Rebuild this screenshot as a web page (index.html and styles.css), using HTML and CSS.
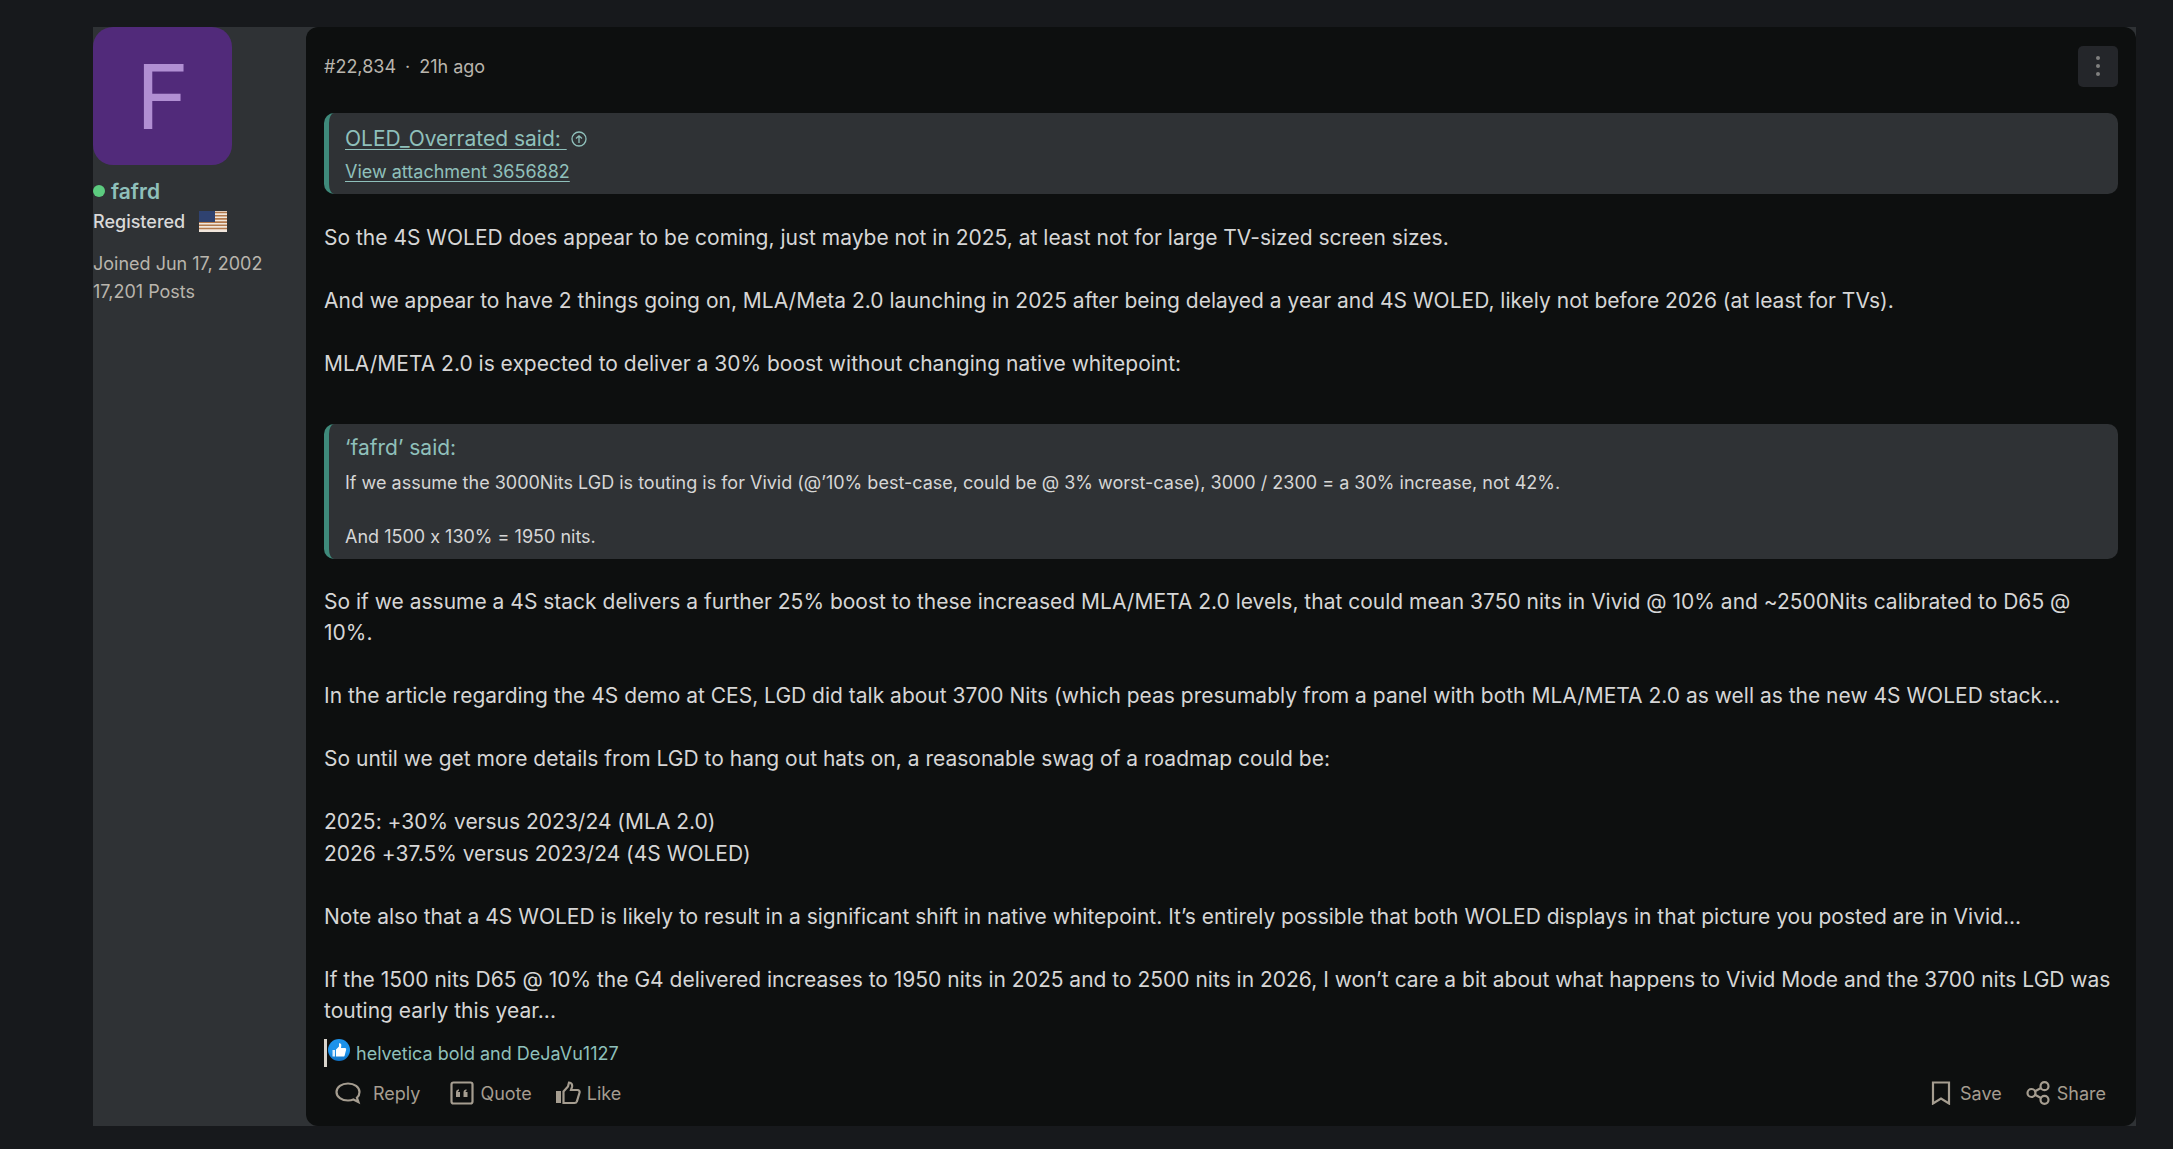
FILE: index.html
```html
<!DOCTYPE html>
<html lang="en">
<head>
<meta charset="utf-8">
<title>Post #22,834</title>
<link rel="stylesheet" href="styles.css">
</head>
<body>
<article class="post">
  <aside class="author">
    <div class="avatar">F</div>
    <div class="name-row"><span class="online"></span><a class="name">fafrd</a></div>
    <div class="title-row">
      <span class="role">Registered</span>
      <svg class="flag" viewBox="0 0 28 21" aria-hidden="true">
        <rect width="28" height="21" fill="#f1e6dc"/>
        <path d="M0 1.500h28M0 4.700h28M0 7.900h28M0 11.100h28M0 14.300h28M0 17.500h28" stroke="#b2794d" stroke-width="1.600"/>
        <rect width="16" height="11" fill="#2f4270"/>
      </svg>
    </div>
    <div class="stats">
      <div>Joined Jun 17, 2002</div>
      <div>17,201 Posts</div>
    </div>
  </aside>
  <main class="body">
    <header class="meta">
      <span class="meta-text">#22,834<span class="dot">·</span>21h ago</span>
      <button class="more" aria-label="More">
        <svg viewBox="0 0 4 20" width="4" height="20"><circle cx="2" cy="2" r="2"/><circle cx="2" cy="10" r="2"/><circle cx="2" cy="18" r="2"/></svg>
      </button>
    </header>
    <blockquote class="quote first">
      <div class="quote-head"><a class="link">OLED_Overrated said:&nbsp;</a>
        <svg class="up" viewBox="0 0 16 16"><circle cx="8" cy="8" r="7"/><path d="M8 12V5M5 7.600 8 4.800l3 2.800"/></svg>
      </div>
      <a class="link attach">View attachment 3656882</a>
    </blockquote>
    <div class="text lead">
      <p>So the 4S WOLED does appear to be coming, just maybe not in 2025, at least not for large TV-sized screen sizes.</p>
      <p>And we appear to have 2 things going on, MLA/Meta 2.0 launching in 2025 after being delayed a year and 4S WOLED, likely not before 2026 (at least for TVs).</p>
      <p>MLA/META 2.0 is expected to deliver a 30% boost without changing native whitepoint:</p>
    </div>
    <blockquote class="quote second">
      <div class="quote-head plain">‘fafrd’ said:</div>
      <div class="quote-text">If we assume the 3000Nits LGD is touting is for Vivid (@’10% best-case, could be @ 3% worst-case), 3000 / 2300 = a 30% increase, not 42%.<br><br>And 1500 x 130% = 1950 nits.</div>
    </blockquote>
    <div class="text after">
      <p>So if we assume a 4S stack delivers a further 25% boost to these increased MLA/META 2.0 levels, that could mean 3750 nits in Vivid @ 10% and ~2500Nits calibrated to D65 @ 10%.</p>
      <p>In the article regarding the 4S demo at CES, LGD did talk about 3700 Nits (which peas presumably from a panel with both MLA/META 2.0 as well as the new 4S WOLED stack...</p>
      <p>So until we get more details from LGD to hang out hats on, a reasonable swag of a roadmap could be:</p>
      <p>2025: +30% versus 2023/24 (MLA 2.0)<br>2026 +37.5% versus 2023/24 (4S WOLED)</p>
      <p>Note also that a 4S WOLED is likely to result in a significant shift in native whitepoint. It’s entirely possible that both WOLED displays in that picture you posted are in Vivid...</p>
      <p>If the 1500 nits D65 @ 10% the G4 delivered increases to 1950 nits in 2025 and to 2500 nits in 2026, I won’t care a bit about what happens to Vivid Mode and the 3700 nits LGD was touting early this year...</p>
    </div>
    <div class="reactions">
      <span class="caret"></span>
      <svg class="like-badge" viewBox="0 0 22 22"><defs><linearGradient id="badge" x1="0" y1="0" x2="0" y2="1"><stop offset="0.6" stop-color="#1c92ea"/><stop offset="1" stop-color="#0e6fc2"/></linearGradient></defs><circle cx="11" cy="11" r="11" fill="url(#badge)"/><path d="M4.500 11h2.500v6.500H4.500z" fill="#dbeeff"/><path d="M8 17.500V10.500l3-3V4.200c1.600-.3 2.600.8 2.300 2.600L13 9h4c1 0 1.400.9 1.100 1.700l-1.500 6c-.2.6-.6.9-1.300.9z" fill="#fff"/></svg>
      <a class="reaction-names">helvetica bold and DeJaVu1127</a>
    </div>
    <footer class="actions">
      <div class="action-group">
        <a class="action reply">
          <svg viewBox="0 0 26 24"><path d="M13 2.500C6.700 2.500 1.500 6 1.500 11s5.200 8.500 11.500 8.500c2 0 3.800-.3 5.400-1l5 2.500-1.500-4.300c1.700-1.500 2.600-3.400 2.600-5.700 0-5-5.200-8.500-11.500-8.500z"/></svg>
          Reply</a>
        <a class="action quote-action">
          <svg viewBox="0 0 24 24"><rect x="1.500" y="1.500" width="21" height="21" rx="2"/><path class="fill" d="M6 11.500c0-1.800 1-3 3-3.300v1.600c-.7.200-1 .6-1 1.200h2V16H6zM13.500 11.500c0-1.800 1-3 3-3.300v1.600c-.7.200-1 .6-1 1.200h2V16h-4z"/></svg>
          Quote</a>
        <a class="action like">
          <svg viewBox="0 0 26 24"><rect class="fill" x="1" y="10" width="5" height="12"/><path d="M8.500 10.500 13 5.500 14 1.500c2.500 0 3.500 2 3 4.500L16 9h6.500c1.500 0 2.500 1.300 2 2.800l-2.600 8.500c-.4 1.100-1.200 1.700-2.400 1.700H8.500z"/></svg>
          Like</a>
      </div>
      <div class="action-group">
        <a class="action save">
          <svg viewBox="0 0 20 24"><path d="M2 1.500h16v21l-8-5-8 5z"/></svg>
          Save</a>
        <a class="action share">
          <svg viewBox="0 0 24 24"><circle cx="5.500" cy="12" r="4"/><circle cx="18.500" cy="5.200" r="4"/><circle cx="18.500" cy="18.800" r="4"/><path d="M9 10.200 15 7M9 13.800l6 3.200"/></svg>
          Share</a>
      </div>
    </footer>
  </main>
</article>
</body>
</html>
```
FILE: styles.css
```css
* { box-sizing: border-box; }
html, body { height: 100%; }
body {
  margin: 0;
  padding: 27px 37px 23px 93px;
  background: #17191c;
  color: #d6d6d6;
  font-family: Inter, "Liberation Sans", sans-serif;
  font-variant-ligatures: no-contextual;
  overflow: hidden;
}
a { color: inherit; }
.post {
  display: flex;
  height: 100%;
  background: #2f3235;
}
.author { width: 213px; flex: none; }
.avatar {
  width: 139px;
  height: 138px;
  display: flex;
  align-items: center;
  justify-content: center;
  border-radius: 20px;
  background: #512a7a;
  color: #b18fd3;
  font-size: 90px;
  font-weight: 400;
}
.name-row { display: flex; align-items: center; gap: 6px; margin-top: 13px; height: 26px; }
.online { width: 12px; height: 12px; border-radius: 50%; background: #5ccb7f; }
.name { color: #8fc0bb; font-size: 21px; font-weight: 600; }
.title-row { display: flex; align-items: center; gap: 14px; margin-top: 4px; height: 26px; }
.role { font-size: 18px; font-weight: 500; color: #d9d9d9; }
.flag { width: 28px; height: 21px; }
.stats { margin-top: 16px; font-size: 18px; line-height: 27.5px; color: #b9b5ad; }

.body {
  flex: 1;
  min-width: 0;
  display: flex;
  flex-direction: column;
  padding: 0 18px;
  background: #0d0f0f;
  border-radius: 12px;
}
.body > * { flex: none; }
.meta { display: flex; justify-content: space-between; align-items: center; height: 78px; margin-bottom: 8px; }
.meta-text { font-size: 18px; color: #b9b5ad; }
.dot { margin: 0 9px; }
.more {
  width: 40px; height: 41px;
  padding: 0;
  display: flex; align-items: center; justify-content: center;
  border: 0; border-radius: 5px;
  background: #24262a;
}
.more svg { width: 4px; height: 20px; }
.more circle { fill: #80807f; }

.quote {
  margin: 0;
  padding: 0 20px 0 16px;
  background: #2f3235;
  border-left: 5px solid #3f8a7b;
  border-radius: 10px;
}
.quote.first { height: 81px; padding-top: 11px; }
.quote-head { display: flex; align-items: center; gap: 4px; color: #8fc0bb; font-size: 21px; line-height: 30px; }
.link { color: #8fc0bb; text-decoration: underline; text-underline-offset: 3px; text-decoration-thickness: 1px; }
.attach { display: block; font-size: 18px; line-height: 32px; margin-top: 2px; }
.up { width: 16px; height: 16px; fill: none; stroke: #8fc0bb; stroke-width: 1.300; }

.text { font-size: 21px; line-height: 31.5px; color: #d6d6d6; }
.text p { margin: 0; }
.text p + p { margin-top: 31.5px; }
.text.lead { margin-top: 28px; }
.quote.second { height: 135px; margin-top: 44.5px; padding-top: 9px; }
.quote-text { font-size: 18px; line-height: 27px; margin-top: 6px; color: #d6d6d6; }
.text.after { margin-top: 26.5px; }

.reactions { display: flex; align-items: flex-start; height: 28px; margin-top: 12.5px; }
.caret { width: 3px; height: 28px; background: #d8d4cc; }
.like-badge { width: 22px; height: 22px; margin-left: 1px; margin-right: 6px; }
.reaction-names { color: #8fc0bb; font-size: 18px; line-height: 29px; }

.actions { display: flex; justify-content: space-between; margin-top: auto; height: 59px; padding: 14px 12px 0 11px; }
.action-group { display: flex; gap: 23px; align-items: flex-start; }
.action { display: flex; align-items: center; gap: 6px; font-size: 18px; color: #a59d90; }
.action svg { height: 24px; width: 26px; fill: none; stroke: #a59d90; stroke-width: 2.200; }
.action svg .fill { fill: #a59d90; stroke: none; }
.reply { margin-right: 7px; gap: 12px; }
.save { gap: 9px; }
.save svg { width: 20px; }
.quote-action svg { width: 24px; }
.share { gap: 7px; margin-left: 1px; }
.share svg { width: 24px; }
```
